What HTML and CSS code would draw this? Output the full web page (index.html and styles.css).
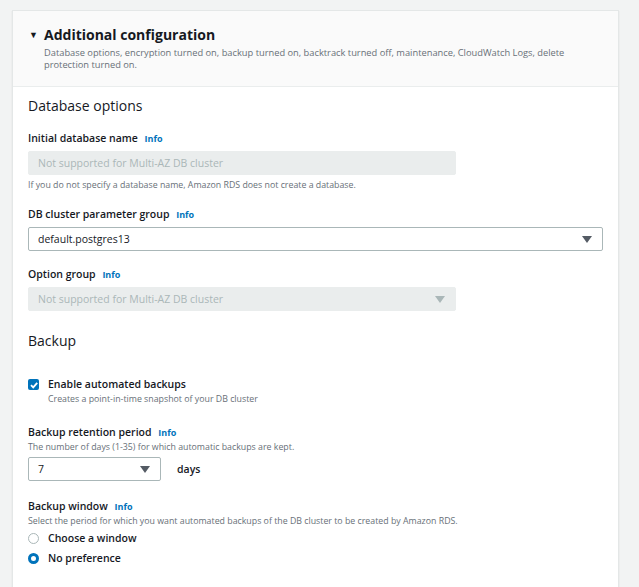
FILE: index.html
```html
<!DOCTYPE html>
<html lang="en">
<head>
    <meta charset="UTF-8">
    <meta name="viewport" content="width=device-width, initial-scale=1.0">
    <title>Additional configuration</title>
    <link rel="stylesheet" href="styles.css">
</head>
<body>
    <div class="panel">
        <div class="panel-header">
            <h2><span class="caret">&#9660;</span>Additional configuration</h2>
            <p class="header-desc">Database options, encryption turned on, backup turned on, backtrack turned off, maintenance, CloudWatch Logs, delete protection turned on.</p>
        </div>

        <div class="panel-body">
            <h3 class="section-title">Database options</h3>

            <div class="field">
                <div class="label">Initial database name <a class="info">Info</a></div>
                <div class="input disabled half">Not supported for Multi-AZ DB cluster</div>
                <div class="hint">If you do not specify a database name, Amazon RDS does not create a database.</div>
            </div>

            <div class="field">
                <div class="label">DB cluster parameter group <a class="info">Info</a></div>
                <div class="input select">default.postgres13
                    <svg class="arrow" width="10" height="7" viewBox="0 0 10 7"><path d="M0 0 H10 L5 7 Z"/></svg>
                </div>
            </div>

            <div class="field">
                <div class="label">Option group <a class="info">Info</a></div>
                <div class="input select disabled half">Not supported for Multi-AZ DB cluster
                    <svg class="arrow" width="10" height="7" viewBox="0 0 10 7"><path d="M0 0 H10 L5 7 Z"/></svg>
                </div>
            </div>

            <h3 class="section-title backup">Backup</h3>

            <div class="check-row">
                <span class="checkbox">
                    <svg width="10" height="10" viewBox="0 0 10 10"><path d="M2 5.2 L4.2 7.4 L8.2 2.8" fill="none" stroke="#fff" stroke-width="1.8"/></svg>
                </span>
                <div>
                    <div class="check-label">Enable automated backups</div>
                    <div class="hint">Creates a point-in-time snapshot of your DB cluster</div>
                </div>
            </div>

            <div class="field">
                <div class="label">Backup retention period <a class="info">Info</a></div>
                <div class="desc">The number of days (1-35) for which automatic backups are kept.</div>
                <div class="days-row">
                    <div class="input select small">7
                        <svg class="arrow" width="10" height="7" viewBox="0 0 10 7"><path d="M0 0 H10 L5 7 Z"/></svg>
                    </div>
                    <span class="days">days</span>
                </div>
            </div>

            <div class="field window">
                <div class="label">Backup window <a class="info">Info</a></div>
                <div class="desc">Select the period for which you want automated backups of the DB cluster to be created by Amazon RDS.</div>
                <div class="radio-row"><span class="radio"></span>Choose a window</div>
                <div class="radio-row"><span class="radio on"></span>No preference</div>
            </div>
        </div>
    </div>
</body>
</html>
```

FILE: styles.css
```css
* {
    margin: 0;
    padding: 0;
    box-sizing: border-box;
}

body {
    font-family: 'Open Sans', 'Noto Sans', sans-serif;
    background: #f2f3f3;
    color: #16191f;
    padding: 10px 20px 0 12px;
    height: 587px;
    overflow: hidden;
}

.panel {
    background: white;
    border: 1px solid #e4e7e7;
    box-shadow: 0 1px 1px rgba(0,0,0,0.12);
    min-height: 600px;
}

.panel-header {
    background: #fafafa;
    border-bottom: 1px solid #eaeded;
    padding: 14px 16px 16px 16px;
}

.panel-header h2 {
    font-size: 14px;
    font-weight: 700;
    line-height: 20px;
    display: flex;
    align-items: center;
}

.caret {
    font-size: 9px;
    width: 15px;
}

.header-desc {
    font-size: 9.3px;
    color: #687078;
    line-height: 11.5px;
    margin-left: 15px;
    margin-top: 2px;
    padding-right: 10px;
}

.panel-body {
    padding: 9px 15px 20px 15px;
}

.section-title {
    font-size: 14px;
    font-weight: 400;
    line-height: 20px;
    margin-bottom: 15px;
}

.section-title.backup {
    margin-top: 20px;
    margin-bottom: 26px;
}

.field {
    margin-bottom: 16px;
}

.label {
    font-size: 10.5px;
    font-weight: 600;
    line-height: 14px;
    margin-bottom: 5px;
}

.info {
    color: #0073bb;
    font-size: 9px;
    font-weight: 700;
    margin-left: 4px;
}

.input {
    height: 24px;
    border: 1px solid #aab7b8;
    border-radius: 2px;
    font-size: 10.5px;
    line-height: 22px;
    padding: 0 9px;
    position: relative;
}

.input.half {
    width: 428px;
}

.input.small {
    width: 133px;
}

.input.disabled {
    background: #eaeded;
    border-color: #eaeded;
    color: #aab7b8;
}

.arrow {
    position: absolute;
    right: 10px;
    top: 8px;
    fill: #545b64;
}

.disabled .arrow {
    fill: #aab7b8;
}

.hint {
    font-size: 8.8px;
    color: #687078;
    line-height: 12px;
    margin-top: 4px;
}

.check-row {
    display: flex;
    gap: 9px;
    margin-bottom: 20px;
}

.check-row .hint {
    margin-top: 2px;
}

.checkbox {
    width: 11px;
    height: 11px;
    background: #0073bb;
    border-radius: 2px;
    margin-top: 2px;
    display: flex;
    align-items: center;
    justify-content: center;
}

.check-label {
    font-size: 10.5px;
    font-weight: 600;
    line-height: 14px;
}

.desc {
    font-size: 8.8px;
    color: #687078;
    line-height: 12px;
    margin-top: -4px;
    margin-bottom: 4px;
}

.days-row {
    display: flex;
    align-items: center;
    gap: 16px;
}

.days {
    font-size: 10.5px;
    font-weight: 600;
}

.field.window {
    margin-top: 18px;
}

.field.window .desc {
    margin-bottom: 1px;
}

.radio-row {
    display: flex;
    align-items: center;
    gap: 9px;
    font-size: 10.5px;
    font-weight: 600;
    height: 20px;
}

.radio {
    width: 11px;
    height: 11px;
    border-radius: 50%;
    border: 1px solid #aab7b8;
}

.radio.on {
    border: 3.5px solid #0073bb;
}
```
